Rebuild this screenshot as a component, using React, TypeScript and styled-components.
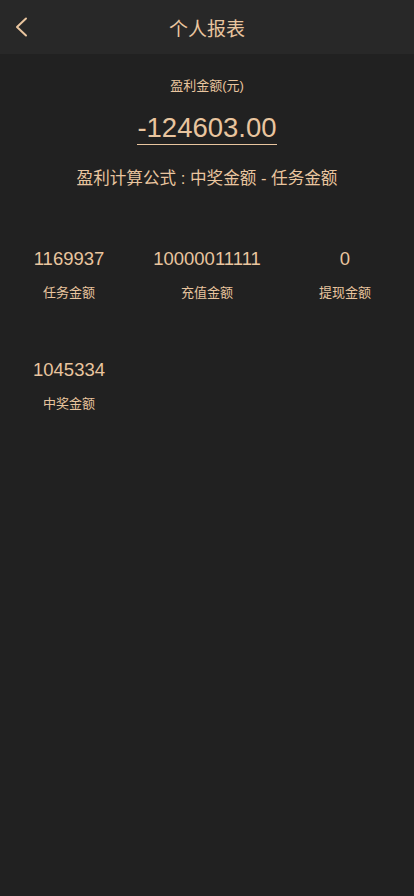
import { createGlobalStyle } from "styled-components";
import styled from "styled-components";

const Global = createGlobalStyle`
  html, body {
    margin: 0;
    padding: 0;
    background: #212121;
  }
  body {
    font-family: "Liberation Sans", "Noto Sans CJK SC", sans-serif;
  }
`;

const gold = "#e9c59f";

const Page = styled.div`
  min-height: 896px;
  background: #212121;
  color: ${gold};
`;

const Header = styled.div`
  height: 54px;
  background: #282828;
  display: flex;
  align-items: center;
  justify-content: center;
  position: relative;
`;

const BackButton = styled.div`
  position: absolute;
  left: 13px;
  top: 15px;
  width: 20px;
  height: 24px;
  display: flex;
  align-items: center;
`;

const HeaderTitle = styled.div`
  font-size: 19px;
  color: ${gold};
`;

const Summary = styled.div`
  display: flex;
  flex-direction: column;
  align-items: center;
  padding-top: 23px;
`;

const Caption = styled.div`
  font-size: 13px;
  line-height: 18px;
`;

const Amount = styled.div`
  margin-top: 17px;
  font-size: 27.5px;
  line-height: 31px;
  padding-bottom: 1px;
  border-bottom: 1px solid ${gold};
`;

const Formula = styled.div`
  margin-top: 23px;
  font-size: 16.6px;
  line-height: 22px;
`;

const Grid = styled.div`
  display: grid;
  grid-template-columns: repeat(3, 1fr);
  row-gap: 58px;
  padding-top: 58px;
`;

const Cell = styled.div`
  display: flex;
  flex-direction: column;
  align-items: center;
`;

const Value = styled.div`
  font-size: 18.5px;
  line-height: 22px;
`;

const Label = styled.div`
  margin-top: 14px;
  font-size: 13px;
  line-height: 17px;
`;

const stats = [
  { value: "1169937", label: "任务金额" },
  { value: "10000011111", label: "充值金额" },
  { value: "0", label: "提现金额" },
  { value: "1045334", label: "中奖金额" },
];

export default function App() {
  return (
    <Page>
      <Global />
      <Header>
        <BackButton>
          <svg width="16" height="22" viewBox="0 0 16 22">
            <path d="M13 2.5 L4 11 L13 19.5" fill="none" stroke={gold} strokeWidth="2" strokeLinecap="round" strokeLinejoin="round" />
          </svg>
        </BackButton>
        <HeaderTitle>个人报表</HeaderTitle>
      </Header>
      <Summary>
        <Caption>盈利金额(元)</Caption>
        <Amount>-124603.00</Amount>
        <Formula>盈利计算公式 : 中奖金额 - 任务金额</Formula>
      </Summary>
      <Grid>
        {stats.map((s) => (
          <Cell key={s.label}>
            <Value>{s.value}</Value>
            <Label>{s.label}</Label>
          </Cell>
        ))}
      </Grid>
    </Page>
  );
}
